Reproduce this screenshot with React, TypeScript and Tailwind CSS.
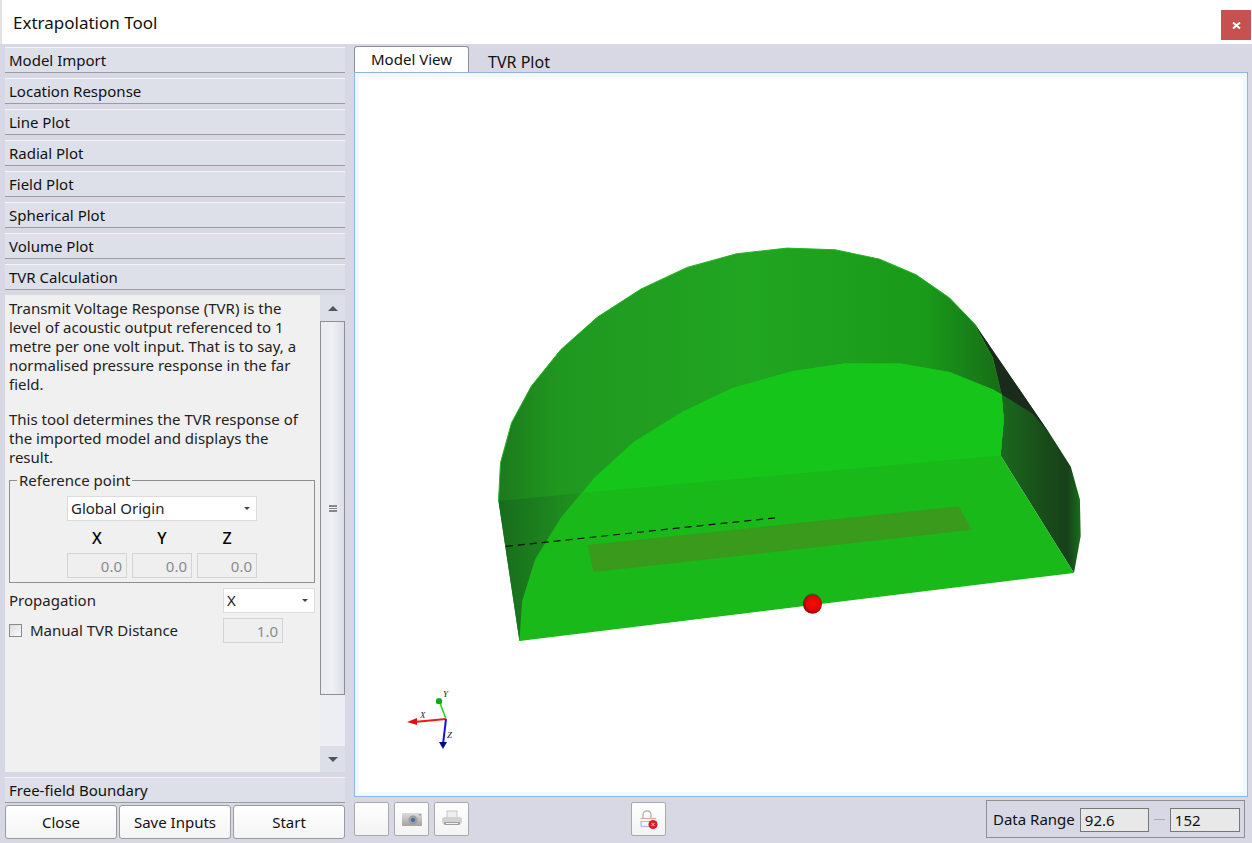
const sectionsTop = [
  "Model Import",
  "Location Response",
  "Line Plot",
  "Radial Plot",
  "Field Plot",
  "Spherical Plot",
  "Volume Plot",
  "TVR Calculation",
];

// outline points read off a 2.53 x 3 blow-up of the model, mapped back to page pixels
const pts = (list: number[][]) =>
  list.map(([x, y]) => `${480 + x / 2.53},${230 + y / 3}`).join(" ");

const backDome = pts([
  [47, 815], [52, 700], [80, 580], [130, 470], [205, 360], [297, 263], [408, 178], [525, 113],
  [650, 72], [778, 55], [900, 60], [1012, 88], [1105, 135], [1190, 205], [1255, 285], [1300, 385],
  [1320, 480], [1327, 570], [1319, 678], [1319, 800], [100, 1235],
]);
const frontArc = pts([
  [100, 1235], [107, 1115], [140, 990], [205, 865], [290, 745], [390, 637], [515, 545], [640, 475],
  [790, 425], [925, 401], [1065, 402], [1190, 427], [1300, 480], [1322, 495], [1327, 570], [1319, 678],
  [1505, 1031],
]);
const upperFront = pts([
  [260, 790], [290, 745], [390, 637], [515, 545], [640, 475], [790, 425], [925, 401], [1065, 402],
  [1190, 427], [1300, 480], [1322, 495], [1327, 570], [1319, 678],
]);
const sideWall = pts([
  [1255, 285], [1445, 615], [1497, 712], [1520, 810], [1522, 920], [1505, 1031], [1319, 678],
  [1327, 570], [1320, 480], [1300, 385],
]);
const sideShadow = pts([
  [1255, 285], [1445, 615], [1400, 552], [1322, 495], [1300, 385],
]);
const leftWall = pts([
  [47, 815], [260, 790], [205, 865], [140, 990], [107, 1115], [100, 1235],
]);
const stripe = pts([[273, 947], [1213, 831], [1247, 901], [288, 1028]]);
const domeEdge = pts([
  [47, 815], [52, 700], [80, 580], [130, 470], [205, 360], [297, 263], [408, 178], [525, 113],
  [650, 72], [778, 55], [900, 60], [1012, 88], [1105, 135], [1190, 205], [1255, 285], [1300, 385],
  [1320, 480],
]);

function Section({ label }: { label: string }) {
  return (
    <div className="h-[26px] shrink-0 border-t border-t-[#f3f4f7] border-b border-b-[#9a9ca0] bg-[#dde0e8] pl-1 text-[15px] leading-[25px] text-[#111]">
      {label}
    </div>
  );
}

function Combo({ label, className }: { label: string; className: string }) {
  return (
    <div className={`flex h-[25px] items-center justify-between border border-[#dcdcdc] bg-white pl-[3px] pr-[6px] text-[15px] text-[#222] ${className}`}>
      <span>{label}</span>
      <span className="h-0 w-0 border-x-[3px] border-t-[3px] border-x-transparent border-t-[#444]" />
    </div>
  );
}

function ReadOnly({ value, className }: { value: string; className: string }) {
  return (
    <div className={`h-[25px] border border-[#d4d4d4] bg-[#efefef] pr-[4px] text-right text-[15px] leading-[24px] text-[#8c8c8c] ${className}`}>
      {value}
    </div>
  );
}

function ToolButton({ children }: { children?: React.ReactNode }) {
  return (
    <div className="flex h-[34px] w-[35px] items-center justify-center rounded-[2px] border border-[#a9a9a9] bg-gradient-to-b from-white to-[#f3f3f3]">
      {children}
    </div>
  );
}

function BottomButton({ label }: { label: string }) {
  return (
    <div className="flex h-[34px] flex-1 items-center justify-center rounded-[3px] border border-[#9b9b9b] bg-gradient-to-b from-white to-[#f4f4f4] text-[15px] text-[#111]">
      {label}
    </div>
  );
}

export default function App() {
  return (
    <div
      className="flex h-[843px] w-[1252px] flex-col overflow-hidden bg-[#d8d8e4]"
      style={{ fontFamily: '"Noto Sans", sans-serif' }}
    >
      <div className="flex h-[44px] shrink-0 items-start justify-between border-l-2 border-l-[#e2e2e2] bg-white pl-[11px] pr-[1px]">
        <span className="mt-[9px] text-[17px] leading-[28px] text-[#111]">Extrapolation Tool</span>
        <div className="mt-[10px] flex h-[30px] w-[30px] items-center justify-center bg-[#c75050]">
          <svg width="9" height="7" viewBox="0 0 9 7">
            <path d="M1 0.5l7 6M8 0.5l-7 6" stroke="#fff" strokeWidth="2" fill="none" />
          </svg>
        </div>
      </div>

      <div className="flex min-h-0 flex-1">
        <div className="ml-[5px] mt-[3px] flex w-[340px] shrink-0 flex-col">
          <div className="flex flex-col gap-[5px]">
            {sectionsTop.map((s) => (
              <Section key={s} label={s} />
            ))}
          </div>
          <div className="mt-[5px] flex h-[477px] shrink-0">
            <div className="flex w-[315px] flex-col bg-[#f0f0f0] pl-1 pt-[4px] text-[15px] leading-[19px] text-[#222]">
              <p className="pr-2">
                Transmit Voltage Response (TVR) is the level of acoustic output referenced to 1 metre per one volt input. That is to say, a normalised pressure response in the far field.
              </p>
              <p className="mt-[16px] pr-2">
                This tool determines the TVR response of the imported model and displays the result.
              </p>
              <fieldset className="mt-[5px] mr-[7px] h-[111px] border border-[#8f8f8f] px-[57px] pb-0 pt-0">
                <legend className="px-[2px] text-[15px] leading-[17px]" style={{ marginLeft: -50 }}>
                  Reference point
                </legend>
                <Combo label="Global Origin" className="mt-[7px] w-[190px]" />
                <div className="mt-[5px] flex w-[190px] justify-between text-center text-[16px] font-medium leading-[24px] text-black">
                  <span className="w-[60px]">X</span>
                  <span className="w-[60px]">Y</span>
                  <span className="w-[60px]">Z</span>
                </div>
                <div className="mt-[3px] flex w-[190px] justify-between">
                  <ReadOnly value="0.0" className="w-[60px]" />
                  <ReadOnly value="0.0" className="w-[60px]" />
                  <ReadOnly value="0.0" className="w-[60px]" />
                </div>
              </fieldset>
              <div className="mt-[5px] flex items-center justify-between pr-[5px]">
                <span>Propagation</span>
                <Combo label="X" className="w-[92px]" />
              </div>
              <div className="mt-[5px] flex items-center pr-[37px]">
                <span className="h-[13px] w-[13px] border border-[#8a8a8a] bg-gradient-to-br from-[#dedede] to-[#f8f8f8]" />
                <span className="ml-2 flex-1">Manual TVR Distance</span>
                <ReadOnly value="1.0" className="w-[60px]" />
              </div>
            </div>
            <div className="flex w-[25px] flex-col bg-[#eceef4]">
              <div className="flex h-[26px] items-center justify-center bg-[#dcdfe8]">
                <span className="h-0 w-0 border-x-[5px] border-b-[5px] border-x-transparent border-b-[#555]" />
              </div>
              <div className="flex h-[374px] items-center justify-center border border-[#8f8f8f] bg-gradient-to-r from-[#e9ebf2] via-[#eef0f6] to-[#dcdfe6]">
                <span className="h-[7px] w-[8px] border-y border-[#888] bg-[linear-gradient(#888_1px,transparent_1px)] bg-[length:8px_2px]" />
              </div>
              <div className="flex-1" />
              <div className="flex h-[26px] items-center justify-center bg-[#dcdfe8]">
                <span className="h-0 w-0 border-x-[5px] border-t-[5px] border-x-transparent border-t-[#555]" />
              </div>
            </div>
          </div>
          <div className="mt-[5px]">
            <Section label="Free-field Boundary" />
          </div>
          <div className="mt-[2px] flex gap-[2px]">
            <BottomButton label="Close" />
            <BottomButton label="Save Inputs" />
            <BottomButton label="Start" />
          </div>
        </div>

        <div className="ml-[9px] flex w-[894px] shrink-0 flex-col">
          <div className="mt-[2px] flex h-[26px] shrink-0 items-end text-[15px] text-[#111]">
            <div className="flex h-[26px] w-[115px] items-center justify-center rounded-t-[3px] border border-b-0 border-[#8d8f96] bg-white">
              Model View
            </div>
            <div className="flex h-[24px] w-[100px] items-center justify-center pt-[4px] text-[16px]">TVR Plot</div>
          </div>
          <div className="h-[725px] shrink-0 border border-[#8fb4e3] bg-[#f3f7ff] p-[4px]">
            <svg viewBox="359 77 885 716" className="block h-full w-full bg-white">
              <defs>
                <linearGradient id="dome" gradientUnits="userSpaceOnUse" x1="499" y1="0" x2="1003" y2="0">
                  <stop offset="0" stopColor="#1c7a1c" />
                  <stop offset="0.12" stopColor="#209820" />
                  <stop offset="0.5" stopColor="#21a621" />
                  <stop offset="0.85" stopColor="#199a19" />
                  <stop offset="1" stopColor="#176c17" />
                </linearGradient>
                <linearGradient id="side" gradientUnits="userSpaceOnUse" x1="1000" y1="0" x2="1080" y2="0">
                  <stop offset="0" stopColor="#1a6a1e" />
                  <stop offset="0.6" stopColor="#194a1a" />
                  <stop offset="0.85" stopColor="#17401a" />
                  <stop offset="1" stopColor="#176a1a" />
                </linearGradient>
                <linearGradient id="leftwall" gradientUnits="userSpaceOnUse" x1="499" y1="0" x2="590" y2="0">
                  <stop offset="0" stopColor="#186c1c" />
                  <stop offset="1" stopColor="#209820" />
                </linearGradient>
                <radialGradient id="ball" cx="0.55" cy="0.45" r="0.6">
                  <stop offset="0" stopColor="#ff0a0a" />
                  <stop offset="0.6" stopColor="#e00606" />
                  <stop offset="1" stopColor="#7e0808" />
                </radialGradient>
              </defs>
              <polygon points={backDome} fill="url(#dome)" />
              <polyline points={domeEdge} fill="none" stroke="#22b624" strokeWidth="1" />
              <polygon points={leftWall} fill="url(#leftwall)" />
              <polygon points={sideWall} fill="url(#side)" />
              <polygon points={sideShadow} fill="#1a2a1c" />
              <polygon points={frontArc} fill="#18b919" />
              <polygon points={upperFront} fill="#16c519" />
              <polygon points={stripe} fill="#3a9a1c" />
              <line x1="506" y1="547" x2="780" y2="518" stroke="#111" strokeWidth="1.2" strokeDasharray="7 5" />
              <circle cx="813" cy="603" r="9" fill="#1a7a1a" />
              <circle cx="813" cy="605" r="9.5" fill="url(#ball)" />
              {/* axes triad */}
              <g strokeWidth="2" fill="none">
                <line x1="446" y1="720" x2="414" y2="723" stroke="#f01818" />
                <polygon points="407,723 417,719 417,726" fill="#e01010" />
                <line x1="446" y1="720" x2="440" y2="704" stroke="#22d822" strokeWidth="1.5" />
                <rect x="436" y="699" width="6" height="6" rx="2" fill="#14a814" />
                <line x1="446" y1="720" x2="443" y2="745" stroke="#1414e0" />
                <polygon points="443,750 439,743 447,743" fill="#0a0a80" />
              </g>
              <g fontFamily='"Liberation Serif", serif' fontStyle="italic" fontSize="9" fill="#222">
                <text x="420" y="719">X</text>
                <text x="443" y="698">Y</text>
                <text x="447" y="739">Z</text>
              </g>
            </svg>
          </div>
          <div className="mt-[5px] flex items-start">
            <div className="flex gap-[5px]">
              <ToolButton />
              <ToolButton>
                <svg width="22" height="16" viewBox="0 0 22 16">
                  <defs>
                    <linearGradient id="cam" x1="0" y1="0" x2="0" y2="1">
                      <stop offset="0" stopColor="#dcdcdc" />
                      <stop offset="1" stopColor="#a2a2a2" />
                    </linearGradient>
                  </defs>
                  <rect x="1" y="2" width="20" height="13" rx="1" fill="url(#cam)" />
                  <circle cx="12" cy="9" r="4.5" fill="#9c9c9c" />
                  <circle cx="12" cy="9" r="2" fill="#3d6aa8" />
                  <rect x="18" y="3" width="2" height="1.5" fill="#6fb0e0" />
                </svg>
              </ToolButton>
              <ToolButton>
                <svg width="22" height="18" viewBox="0 0 22 18">
                  <rect x="6" y="1" width="10" height="7" fill="#efefef" stroke="#c8c8c8" />
                  <rect x="1" y="7" width="20" height="7" rx="2.5" fill="#d2d2d2" />
                  <rect x="3" y="12" width="16" height="3" rx="1" fill="#9e9e9e" />
                  <rect x="5" y="13" width="12" height="1" fill="#f2f2f2" />
                </svg>
              </ToolButton>
            </div>
            <div className="ml-[162px]">
              <ToolButton>
                <svg width="20" height="22" viewBox="0 0 20 22" fill="none">
                  <path d="M4 10V7c0-5.5 8-5.5 8 0v3" stroke="#b7a8a8" strokeWidth="1.2" />
                  <path d="M1.5 10.5H17" stroke="#e2a8a8" strokeWidth="1.2" />
                  <path d="M2 18.5v-5h11" stroke="#a8bde0" strokeWidth="1.2" />
                  <path d="M2 18.5h9" stroke="#a8bde0" strokeWidth="1.2" />
                  <circle cx="14" cy="16.5" r="4.6" fill="#d91f2c" />
                  <path d="M12.5 15l3 3m0-3l-3 3" stroke="#f7c8c8" />
                </svg>
              </ToolButton>
            </div>
            <div className="ml-auto mr-[3px] -mt-[2px] flex h-[38px] w-[259px] items-center border border-[#8f8f8f] pl-[6px] pt-[1px] text-[15px] text-[#111]">
              <span>Data Range</span>
              <div className="ml-[5px] h-[24px] w-[69px] border border-[#777] bg-[#e8e8e8] pl-1 leading-[22px]">92.6</div>
              <span className="mx-[5px] h-px w-[11px] bg-[#aaa]" />
              <div className="h-[24px] w-[70px] border border-[#777] bg-[#e8e8e8] pl-1 leading-[22px]">152</div>
            </div>
          </div>
        </div>
      </div>
    </div>
  );
}
